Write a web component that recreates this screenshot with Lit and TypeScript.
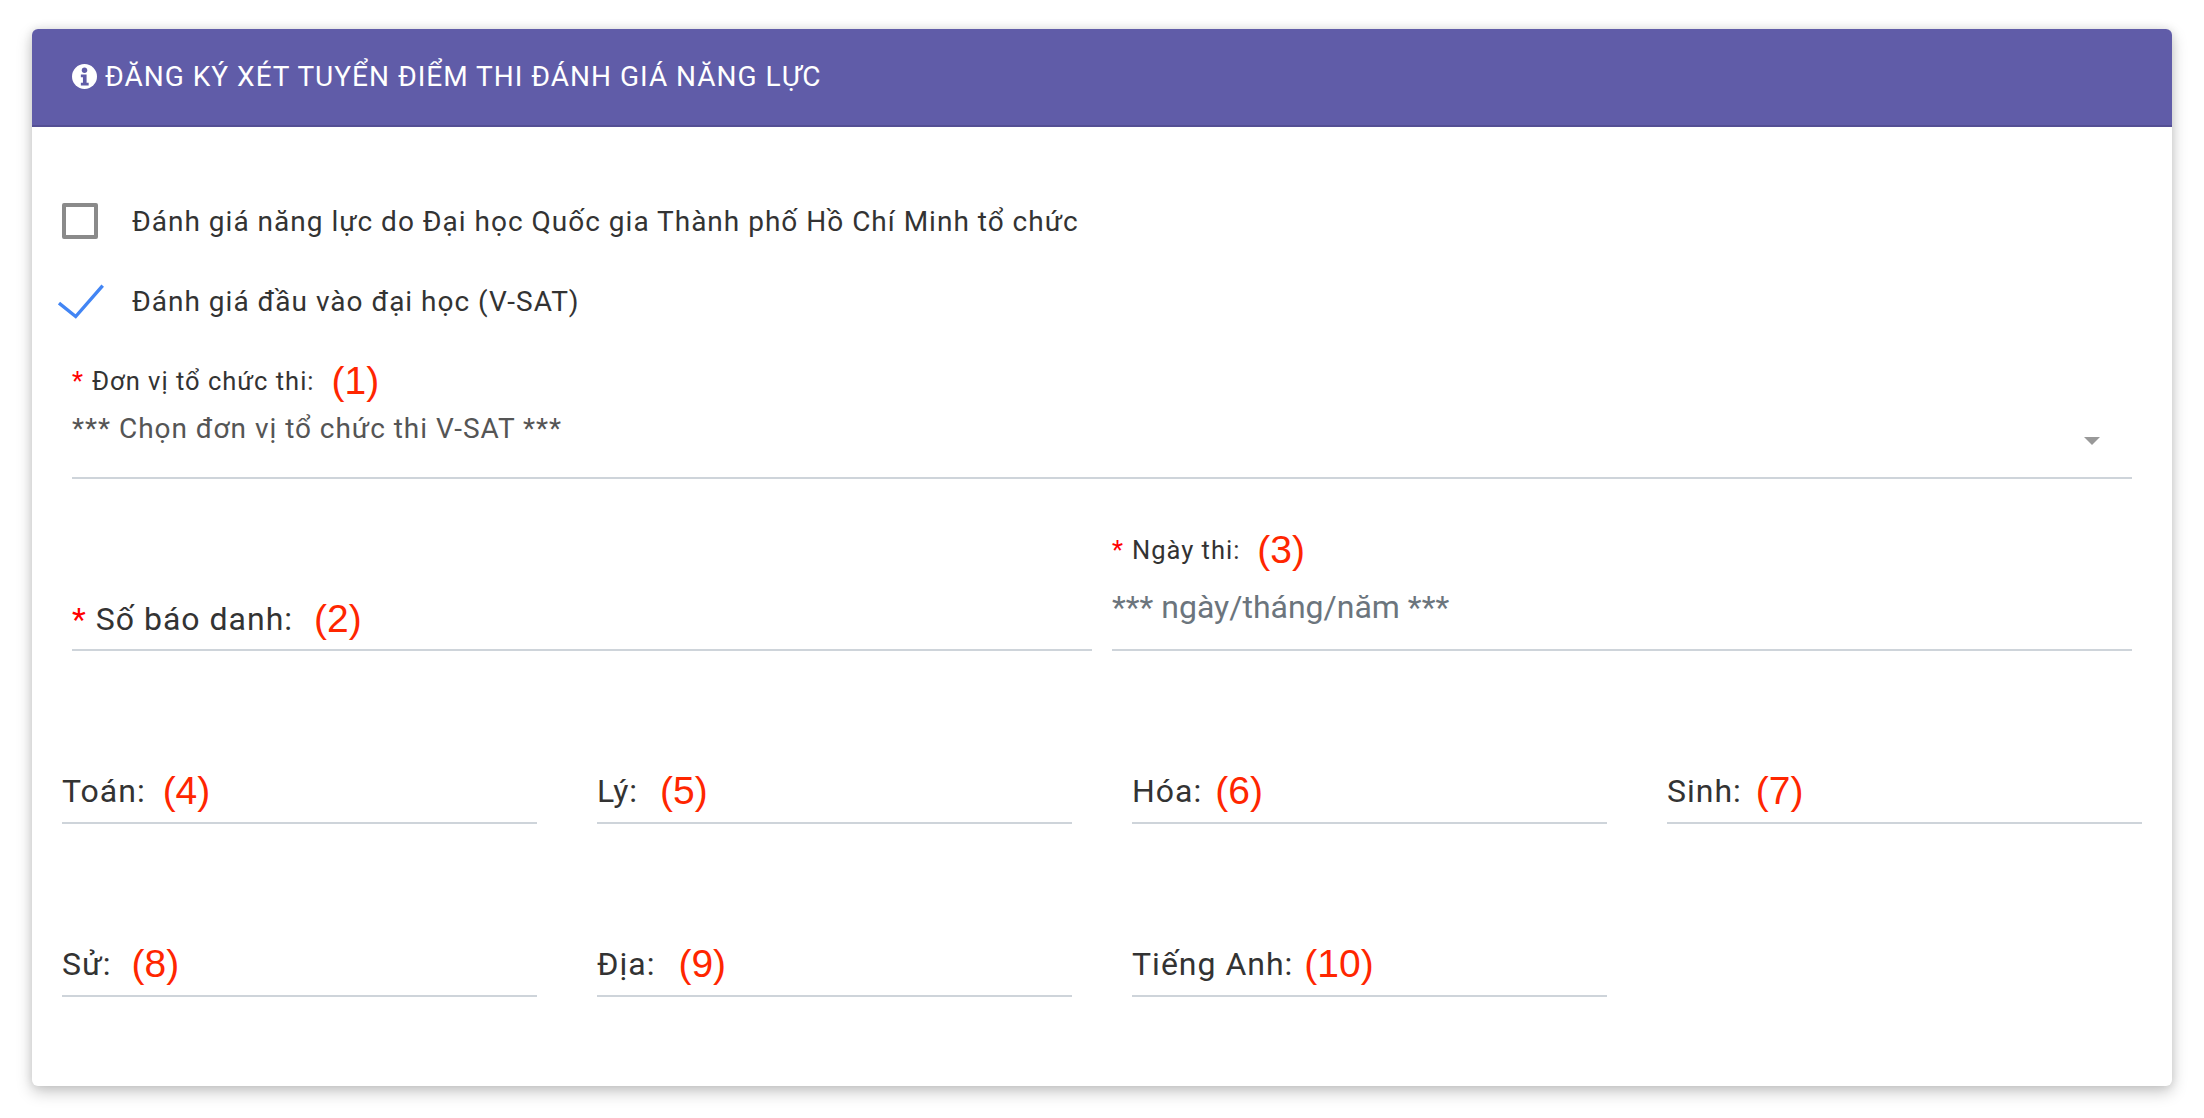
import { LitElement, html, css } from "lit";
import { customElement } from "lit/decorators.js";

const scores1 = [["Toán:", "(4)", 17], ["Lý:", "(5)", 22], ["Hóa:", "(6)", 13], ["Sinh:", "(7)", 14]];
const scores2 = [["Sử:", "(8)", 20], ["Địa:", "(9)", 23], ["Tiếng Anh:", "(10)", 11]];

@customElement("app-root")
export class AppRoot extends LitElement {
  static styles = css`
    :host { display: block; font-family: Roboto, "Noto Sans", sans-serif; color: #333; background: #fff; min-height: 1118px; padding: 29px 32px 0; box-sizing: border-box; }
    .card { height: 1057px; background: #fff; border-radius: 6px; box-shadow: 0 6px 16px rgba(0,0,0,.22), 0 0 10px rgba(0,0,0,.1); overflow: hidden; }
    .head { height: 98px; box-sizing: border-box; background: #605ca8; border-bottom: 2px solid #544f94; display: flex; align-items: center; padding: 0 0 2px 40px; color: #fff; font-size: 28px; letter-spacing: 1px; gap: 8px; }
    .head svg { width: 25px; height: 25px; flex: none; }
    .body { padding: 0 40px 0 30px; }
    .check { display: flex; align-items: center; height: 36px; font-size: 28px; letter-spacing: 1px; }
    .c1 { margin-top: 76px; }
    .c2 { margin-top: 44px; }
    .box { width: 36px; height: 36px; box-sizing: border-box; border: 4px solid #8a8a8a; border-radius: 2px; margin-right: 34px; flex: none; }
    .tick { width: 48px; height: 36px; margin: 0 26px 0 -4px; flex: none; }
    .inner { padding: 0 0 0 10px; }
    .label { display: flex; align-items: center; font-size: 25.5px; letter-spacing: 1px; height: 40px; }
    .first { margin-top: 42px; }
    .star { color: #f00; margin-right: 8px; }
    .note { color: #ff2600; font-family: "Liberation Sans", Arial, sans-serif; font-size: 39px; letter-spacing: 0; margin-left: 17px; }
    .select { position: relative; height: 68px; padding-top: 8px; border-bottom: 2px solid #ced4da; font-size: 28px; letter-spacing: .97px; color: #555; line-height: 40px; }
    .arrow { position: absolute; right: 32px; top: 36px; border-top: 8px solid #999; border-left: 8px solid transparent; border-right: 8px solid transparent; }
    .two { display: grid; grid-template-columns: 1020px 1020px; column-gap: 20px; margin-top: 51px; align-items: end; }
    .field { border-bottom: 2px solid #ced4da; display: flex; align-items: center; height: 40px; padding-bottom: 10px; font-size: 32px; letter-spacing: 1px; }
    .field .star { margin-right: 9px; }
    .field .note { margin-left: 21px; }
    .ph { color: #6c757d; font-size: 32px; height: 62px; border-bottom: 2px solid #ced4da; line-height: 40px; margin-top: 17px; }
    .scores { display: grid; grid-template-columns: repeat(4, 475px); column-gap: 60px; margin-top: 117px; }
    .sf { display: flex; align-items: center; height: 46px; border-bottom: 2px solid #ced4da; font-size: 32px; letter-spacing: 1px; padding-bottom: 8px; }
  `;
  private scoreRow(items: (string | number)[][]) {
    return items.map(([t, n, g]) => html`<div class="sf"><span>${t}</span><span class="note" style="margin-left:${g}px">${n}</span></div>`);
  }
  render() {
    return html`<div class="card">
      <div class="head">
        <svg viewBox="0 0 24 24"><circle cx="12" cy="12" r="12" fill="#fff"/><circle cx="12" cy="6" r="2.6" fill="#605ca8"/><path d="M8.5 10h5.5v8h2v2.6H8.5V18h2v-5.4h-2z" fill="#605ca8"/></svg>
        <span>ĐĂNG KÝ XÉT TUYỂN ĐIỂM THI ĐÁNH GIÁ NĂNG LỰC</span>
      </div>
      <div class="body">
        <div class="check c1"><span class="box"></span><span>Đánh giá năng lực do Đại học Quốc gia Thành phố Hồ Chí Minh tổ chức</span></div>
        <div class="check c2">
          <svg class="tick" viewBox="0 0 48 36"><path d="M1 20l16.7 13.5L44.7 2.7" fill="none" stroke="#4285f4" stroke-width="3.4"/></svg>
          <span>Đánh giá đầu vào đại học (V-SAT)</span>
        </div>
        <div class="inner">
          <div class="label first"><span class="star">*</span><span>Đơn vị tổ chức thi:</span><span class="note">(1)</span></div>
          <div class="select">*** Chọn đơn vị tổ chức thi V-SAT ***<span class="arrow"></span></div>
          <div class="two">
            <div class="field"><span class="star">*</span><span>Số báo danh:</span><span class="note">(2)</span></div>
            <div><div class="label"><span class="star">*</span><span>Ngày thi:</span><span class="note">(3)</span></div><div class="ph">*** ngày/tháng/năm ***</div></div>
          </div>
        </div>
        <div class="scores">${this.scoreRow(scores1)}</div>
        <div class="scores">${this.scoreRow(scores2)}</div>
      </div>
    </div>`;
  }
}
